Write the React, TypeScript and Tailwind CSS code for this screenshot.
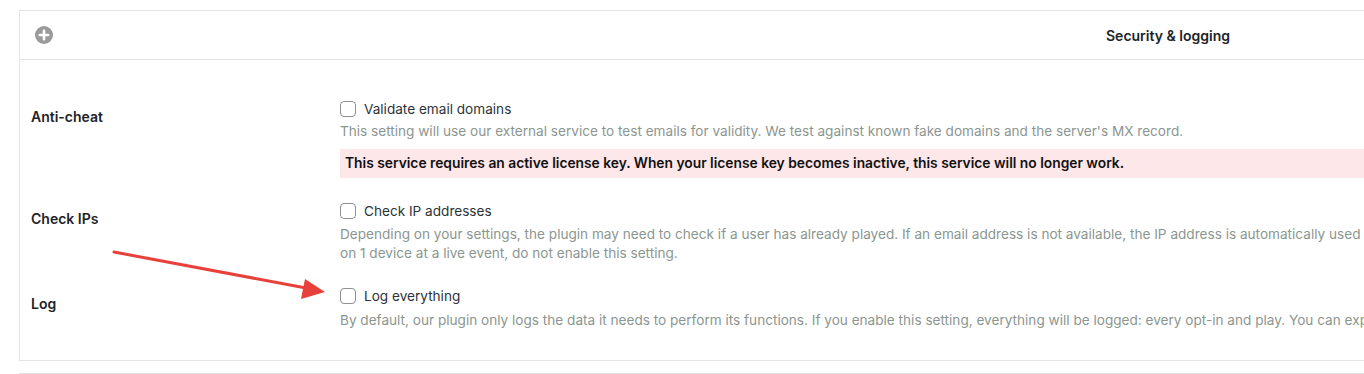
import React from 'react';

const font = { fontFamily: 'Inter, "Liberation Sans", sans-serif' };

function Checkbox() {
  return <span className="inline-block w-4 h-4 rounded-[4px] border border-[#8c8f94] bg-white shrink-0" />;
}

function PlusCircle() {
  return (
    <svg width="18" height="18" viewBox="0 0 18 18" className="shrink-0">
      <circle cx="9" cy="9" r="9" fill="#9b9b9b" />
      <path d="M9 4.8v8.4M4.8 9h8.4" stroke="#fff" strokeWidth="2.6" strokeLinecap="round" />
    </svg>
  );
}

function Row({ label, option, children }: { label: string; option: string; children: React.ReactNode }) {
  return (
    <div className="grid grid-cols-[309px_1fr]">
      <div className="mt-[9px] text-[14px] leading-[18px] font-semibold text-[#1d2327]">{label}</div>
      <div className="flex flex-col">
        <label className="flex items-center gap-2 h-5">
          <Checkbox />
          <span className="text-[13.6px] text-[#2c3338]">{option}</span>
        </label>
        {children}
      </div>
    </div>
  );
}

function Desc({ children, className }: { children: React.ReactNode; className: string }) {
  return <p className={`text-[13.6px] leading-[19px] text-[#8b9690] whitespace-nowrap ${className}`}>{children}</p>;
}

export default function App() {
  return (
    <div className="relative w-full h-[374px] overflow-hidden bg-white" style={font}>
      <div className="pt-[10px] pl-[19px] flex flex-col gap-[12px]">
        <div className="w-[2280px] border border-[#e2e4e7] bg-white">
          <div className="flex items-center h-[49px] px-[15px] border-b border-[#e2e4e7]">
            <PlusCircle />
            <div className="flex-1 text-center text-[14px] font-semibold text-[#1d2327]">Security &amp; logging</div>
          </div>
          <div className="flex flex-col gap-[23px] pl-[11px] pt-[39px] pb-[30px]">
            <Row label="Anti-cheat" option="Validate email domains">
              <Desc className="mt-[3px]">
                This setting will use our external service to test emails for validity. We test against known fake domains and the server's MX record.
              </Desc>
              <div className="mt-[8px] h-[29px] flex items-center pl-[5px] bg-[#fde7e9] text-[13.8px] font-semibold text-[#111]">
                This service requires an active license key. When your license key becomes inactive, this service will no longer work.
              </div>
            </Row>
            <Row label="Check IPs" option="Check IP addresses">
              <Desc className="mt-[4px]">
                Depending on your settings, the plugin may need to check if a user has already played. If an email address is not available, the IP address is automatically used
                <br />
                on 1 device at a live event, do not enable this setting.
              </Desc>
            </Row>
            <Row label="Log" option="Log everything">
              <Desc className="mt-[5px]">
                By default, our plugin only logs the data it needs to perform its functions. If you enable this setting, everything will be logged: every opt-in and play. You can export the logs at any time.
              </Desc>
            </Row>
          </div>
        </div>
        <div className="w-[2280px] h-[40px] border border-[#e2e4e7] bg-white" />
      </div>
      <svg className="absolute left-0 top-0 pointer-events-none" width="1364" height="374">
        <line x1="114" y1="252" x2="306" y2="288" stroke="#e8403a" strokeWidth="3" strokeLinecap="round" />
        <polygon points="325,292 301,299 305,279" fill="#e8403a" />
      </svg>
    </div>
  );
}
